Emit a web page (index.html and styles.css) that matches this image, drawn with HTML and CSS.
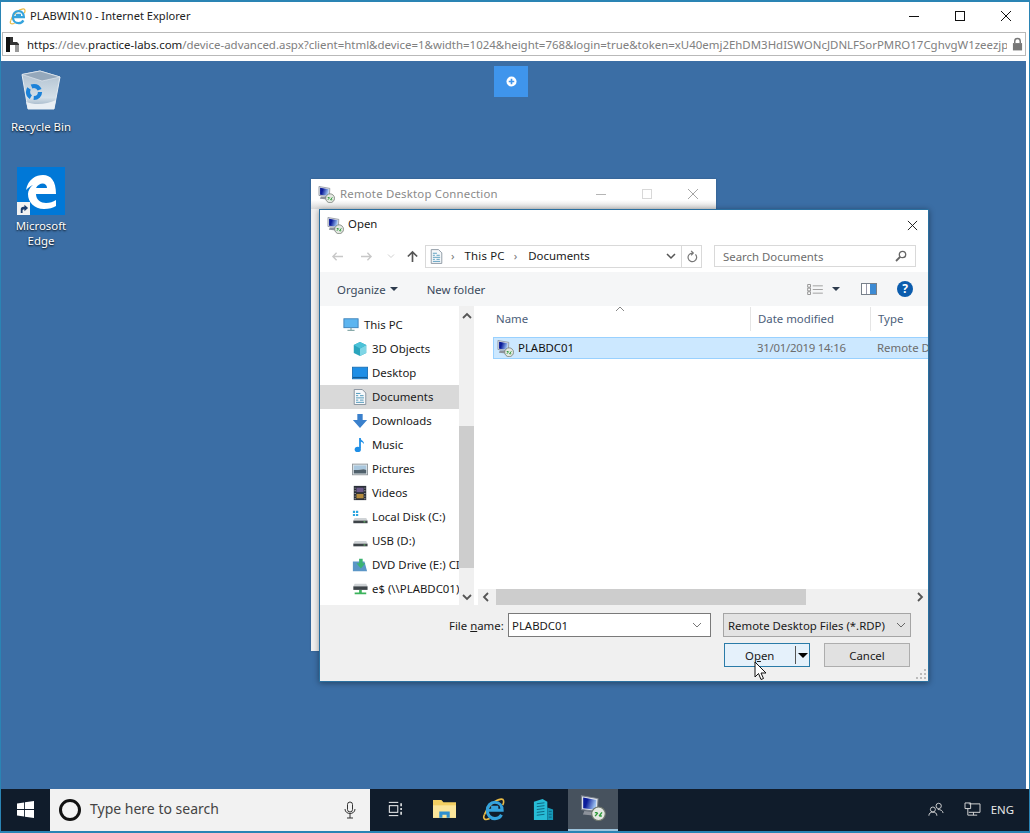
FILE: index.html
```html
<!DOCTYPE html>
<html lang="en">
<head>
<meta charset="utf-8">
<title>PLABWIN10 - Internet Explorer</title>
<link rel="stylesheet" href="styles.css">
</head>
<body>
<svg class="defs" width="0" height="0" aria-hidden="true">
  <defs>
    <linearGradient id="scr" x1="0" y1="0" x2="1" y2="0.3"><stop offset=".35" stop-color="#0c1d9a"/><stop offset="1" stop-color="#9cc0f0"/></linearGradient>
    <linearGradient id="binfill" x1="0" y1="0" x2="0" y2="1"><stop offset="0" stop-color="#aebfcf"/><stop offset=".7" stop-color="#d5e0e8"/><stop offset="1" stop-color="#8fa7bd"/></linearGradient>
    <symbol id="rdp" viewBox="0 0 18 18">
      <path d="M1 .5l11.500 2-.5 9L1 10z" fill="#dfe3ea" stroke="#7a808a" stroke-width=".7"/>
      <path d="M2.200 1.800l9.100 1.600-.4 6.800-8.700-1z" fill="url(#scr)"/>
      <path d="M3 11l8 .8 1.500 2.700-10.500-1z" fill="#8d929b"/>
      <circle cx="12.800" cy="13" r="4.700" fill="#e4e8e2" stroke="#70786f" stroke-width=".8"/>
      <path d="M10.500 14.600l1.800-2.200M13.200 14.600l2-2.600M10.300 12.200h1.800M13.400 14.600h1.700" stroke="#2d9a3a" stroke-width="1" fill="none"/>
    </symbol>
    <symbol id="docicon" viewBox="0 0 16 18">
      <path d="M1.500 .5h9l4 4v13h-13z" fill="#f6f8fa" stroke="#7d8a96"/>
      <path d="M3.500 5h5M3.500 7.500h2.500M8 7.500h4M3.500 10h9M3.500 12.500h2.500M8 12.500h4M3.500 15h9" stroke="#3f8fb5" stroke-width="1"/>
    </symbol>
    <symbol id="ie" viewBox="0 0 24 24">
      <path d="M2.500 17.500C6 8 14 1.800 20 1.200c3-.2 3.300 2.800 1.600 6.300" fill="none" stroke="#e9bb46" stroke-width="1.700"/>
      <path d="M2.500 17.500c-2 4.500.5 6 5.500 4" fill="none" stroke="#e9bb46" stroke-width="1.700"/>
      <path d="M6 12.800h15c0-5-3-8.300-7.500-8.300S5.500 8 5.500 13s3.500 8.500 8 8.500c3 0 5.500-1.500 6.800-4M9.500 9.800h7.500" fill="none" stroke="#35a3dc" stroke-width="3.200"/>
    </symbol>
  </defs>
</svg>

<div class="browser">
  <header class="titlebar">
    <svg class="ie-title"><use href="#ie"/></svg>
    <span class="title-text">PLABWIN10 - Internet Explorer</span>
    <div class="winctl">
      <svg viewBox="0 0 12 12" class="ctl"><path d="M1 6.500h10" stroke="#111" fill="none"/></svg>
      <svg viewBox="0 0 12 12" class="ctl"><rect x="1.500" y="1.500" width="9" height="9" stroke="#111" fill="none"/></svg>
      <svg viewBox="0 0 12 12" class="ctl"><path d="M1 1l10 10M11 1L1 11" stroke="#111" fill="none"/></svg>
    </div>
  </header>

  <div class="addressbar">
    <svg class="favicon" viewBox="0 0 14 16"><path d="M0 1h4v15H0z" fill="#111"/><path d="M4 1h3v5h4l2 2v8H9V9H4z" fill="#333"/><path d="M9 9h4v7H9z" fill="#999"/></svg>
    <span class="url"><b>https</b>://dev.<b>practice-labs.com</b>/device-advanced.aspx?client=html&amp;device=1&amp;width=1024&amp;height=768&amp;login=true&amp;token=xU40emj2EhDM3HdISWONcJDNLFSorPMRO17CghvgW1zeezjp</span>
    <svg class="lock" viewBox="0 0 12 14"><path d="M3 6V4a3 3 0 0 1 6 0v2" fill="none" stroke="#777" stroke-width="1.600"/><rect x="1" y="6" width="10" height="8" fill="#777"/></svg>
  </div>

  <main class="desktop">
    <div class="desk-icon bin">
      <svg class="bin-art" viewBox="0 0 40 44">
        <path d="M1 4.500L19 1l20 6-6 32H7z" fill="url(#binfill)" stroke="#e6edf3"/>
        <path d="M1 4.500L19 1l20 6-18 4z" fill="#95a8bb" stroke="#dfe7ee" stroke-width=".7"/>
        <path d="M5 32c8 3 20 3 30-2l-2 9H7z" fill="#e9eff4"/>
        <g fill="none" stroke="#1b82d9" stroke-width="4.200">
          <circle cx="13" cy="22" r="6" stroke-dasharray="9.500 3"/>
        </g>
      </svg>
      <span>Recycle Bin</span>
    </div>
    <div class="desk-icon edge">
      <div class="edge-tile">
        <svg viewBox="0 0 48 48" class="edge-e"><path fill-rule="evenodd" d="M9 23C11 12 19 8 26 8c8 0 13 6 13 19H19c0 6 5 9 10 9 4 0 7-1 10-3v6c-3 2-7 3-12 3-10 0-16-7-16-15 0-3 2-7 5-9-3 1-5 3-7 5zM19 21h11c0-6-8-6-11 0z" fill="#fff"/></svg>
        <span class="shortcut"><svg viewBox="0 0 12 12"><path d="M3 11V7c0-2 1-3 3-3h1V2l4 3.500L7 9V7H6c-1 0-1 1-1 2v2z" fill="#1a3d6e"/></svg></span>
      </div>
      <span>Microsoft<br>Edge</span>
    </div>

    <button class="plus-btn" type="button" aria-label="Expand">
      <svg viewBox="0 0 12 12"><circle cx="6" cy="6" r="5.500" fill="#fff"/><path d="M6 3v6M3 6h6" stroke="#3f95ec" stroke-width="1.800"/></svg>
    </button>

    <section class="rdc">
      <div class="rdc-title">
        <svg class="rdp-sm"><use href="#rdp"/></svg>
        <span class="rdc-text">Remote Desktop Connection</span>
        <div class="rdc-ctl">
          <svg viewBox="0 0 12 12"><path d="M1 6.500h10" stroke="#b5b5b5" fill="none"/></svg>
          <svg viewBox="0 0 12 12"><rect x="1.500" y="1.500" width="9" height="9" stroke="#d8d8d8" fill="none"/></svg>
          <svg viewBox="0 0 12 12"><path d="M1 1l10 10M11 1L1 11" stroke="#a5a5a5" fill="none"/></svg>
        </div>
      </div>
    </section>

    <section class="dialog">
      <div class="dlg-title">
        <svg class="rdp-sm"><use href="#rdp"/></svg>
        <span class="dlg-text">Open</span>
        <svg class="dlg-x" viewBox="0 0 12 12"><path d="M1 1l10 10M11 1L1 11" stroke="#111" fill="none"/></svg>
      </div>

      <div class="dlg-nav">
        <svg class="nav-ic" viewBox="0 0 14 12"><path d="M13 6H2M6 2L2 6l4 4" fill="none" stroke="#c8c8c8" stroke-width="1.500"/></svg>
        <svg class="nav-ic" viewBox="0 0 14 12"><path d="M1 6h11M8 2l4 4-4 4" fill="none" stroke="#c8c8c8" stroke-width="1.500"/></svg>
        <svg class="nav-caret" viewBox="0 0 8 6"><path d="M1 1.500l3 3 3-3" fill="none" stroke="#cfcfcf"/></svg>
        <svg class="nav-up" viewBox="0 0 14 14"><path d="M7 13V2M2 7l5-5 5 5" fill="none" stroke="#555" stroke-width="1.800"/></svg>
        <div class="crumbs">
          <svg class="crumb-doc"><use href="#docicon"/></svg>
          <span class="sep">›</span><span class="crumb-pc">This PC</span><span class="sep sep2">›</span><span>Documents</span>
          <svg class="crumb-chev" viewBox="0 0 10 8"><path d="M1 2l4 4 4-4" fill="none" stroke="#555" stroke-width="1.500"/></svg>
          <span class="crumb-refresh"><svg viewBox="0 0 14 14"><path d="M11 4.500A5 5 0 1 1 7 3h1M6 0.500L8.500 3 6 5.500" fill="none" stroke="#777" stroke-width="1.400"/></svg></span>
        </div>
        <div class="search">
          <span>Search Documents</span>
          <svg viewBox="0 0 12 12"><circle cx="7.500" cy="4.500" r="3.200" fill="none" stroke="#666" stroke-width="1.300"/><path d="M5 7l-4 4" stroke="#666" stroke-width="1.800"/></svg>
        </div>
      </div>

      <div class="dlg-tools">
        <span class="tool">Organize</span><i class="tri"></i>
        <span class="tool newf">New folder</span>
        <div class="tools-right">
          <svg class="view-ic" viewBox="0 0 18 12"><path d="M.5.5h3v3h-3zM.5 4.500h3v3h-3zM.5 8.500h3v3h-3z" fill="#fff" stroke="#8b8b8b"/><path d="M6 2h11M6 6h11M6 10h11" stroke="#9a9a9a"/></svg>
          <i class="tri view-tri"></i>
          <svg class="pane-ic" viewBox="0 0 16 12"><rect x=".5" y=".5" width="15" height="11" fill="#fff" stroke="#77808a"/><rect x="9" y="1" width="6" height="10" fill="#3d8bd4"/><rect x="5" y="1" width="1" height="10" fill="#99a"/></svg>
          <svg class="help-ic" viewBox="0 0 16 16"><circle cx="8" cy="8" r="8" fill="#0b5cad"/><text x="8" y="12" text-anchor="middle" class="help-q">?</text></svg>
        </div>
      </div>

      <div class="dlg-body">
        <nav class="tree">
          <div class="tree-item root"><svg viewBox="0 0 18 16"><rect x="1" y="1" width="16" height="10" fill="#5db5f0" stroke="#3b7fb8"/><path d="M5 14h8M9 11v3" stroke="#8aa" stroke-width="1.500"/></svg><span>This PC</span></div>
          <div class="tree-item"><svg viewBox="0 0 18 18"><path d="M9 1l7 3.500v9L9 17l-7-3.500v-9z" fill="#2aa5bd"/><path d="M9 8.500V17l7-3.500v-9z" fill="#7fd6e6"/><path d="M2 4.500L9 1l7 3.500-7 4z" fill="#4cc2d8"/></svg><span>3D Objects</span></div>
          <div class="tree-item"><svg viewBox="0 0 18 14"><rect x=".5" y=".5" width="17" height="13" fill="#1e8ee6" stroke="#1a6fb4"/><path d="M1 12h16" stroke="#0d4f85"/></svg><span>Desktop</span></div>
          <div class="tree-item active"><svg viewBox="0 0 16 18"><use href="#docicon"/></svg><span>Documents</span></div>
          <div class="tree-item"><svg viewBox="0 0 18 18"><path d="M6 1h6v7h5l-8 9-8-9h5z" fill="#3a80cc"/></svg><span>Downloads</span></div>
          <div class="tree-item"><svg viewBox="0 0 18 18"><path d="M9 1v12" stroke="#1e8ee6" stroke-width="2"/><ellipse cx="6.500" cy="14" rx="3.500" ry="3" fill="#1e8ee6"/><path d="M9 1c1 3 5 3 4.500 7-1-2-3-2.500-4.500-3z" fill="#1e8ee6"/></svg><span>Music</span></div>
          <div class="tree-item"><svg viewBox="0 0 18 16"><rect x=".5" y="2.500" width="17" height="12" fill="#dfe6ea" stroke="#8c9398"/><path d="M2 4h14v5c-4-2-8 1-14 0z" fill="#a9c7de"/><path d="M2 9c6 1 10-2 14 0v4H2z" fill="#50606b"/></svg><span>Pictures</span></div>
          <div class="tree-item"><svg viewBox="0 0 16 18"><rect x="1" y="1" width="14" height="16" fill="#2a2f38"/><path d="M4 3h8v5H4z" fill="#6c5a8a"/><path d="M4 10h8v5H4z" fill="#b58c3d"/><path d="M2 3h1v1H2zM2 6h1v1H2zM2 9h1v1H2zM2 12h1v1H2zM2 15h1v1H2zM13 3h1v1h-1zM13 6h1v1h-1zM13 9h1v1h-1zM13 12h1v1h-1zM13 15h1v1h-1z" fill="#ddd"/></svg><span>Videos</span></div>
          <div class="tree-item"><svg viewBox="0 0 18 16"><path d="M1 1h2.500v2.500H1zM4.500 1H7v2.500H4.500zM1 4.500h2.500V7H1zM4.500 4.500H7V7H4.500z" fill="#2aa5e0"/><path d="M3 9h13l1.500 3H1.500z" fill="#cfd3d6"/><rect x="1.500" y="12" width="16" height="3" fill="#3e4449"/><rect x="13" y="13" width="2" height="1" fill="#6fdc6f"/></svg><span>Local Disk (C:)</span></div>
          <div class="tree-item"><svg viewBox="0 0 18 16"><path d="M3 8h13l1.500 3H1.500z" fill="#cfd3d6"/><rect x="1.500" y="11" width="16" height="3" fill="#3e4449"/><rect x="13" y="12" width="2" height="1" fill="#6fdc6f"/></svg><span>USB (D:)</span></div>
          <div class="tree-item"><svg viewBox="0 0 18 16"><path d="M1 4h13l3 11H1z" fill="#5b96c7"/><path d="M8 1h4v5h3l-5 6-5-6h3z" fill="#3cb371"/></svg><span>DVD Drive (E:) CI</span></div>
          <div class="tree-item"><svg viewBox="0 0 18 16"><path d="M3 2h13l1.500 3H1.500z" fill="#cfd3d6"/><rect x="1.500" y="5" width="16" height="4" fill="#3e4449"/><path d="M8 9h3v3h5v2H3v-2h5z" fill="#3cb35c"/></svg><span>e$ (\\PLABDC01)</span></div>
        </nav>
        <div class="vscroll">
          <svg class="arrow" viewBox="0 0 10 8"><path d="M1 6l4-4 4 4" fill="none" stroke="#555" stroke-width="1.800"/></svg>
          <div class="vthumb"></div>
          <svg class="arrow" viewBox="0 0 10 8"><path d="M1 2l4 4 4-4" fill="none" stroke="#555" stroke-width="1.800"/></svg>
        </div>
        <div class="files">
          <div class="file-head">
            <span class="col-name">Name</span>
            <span class="col-date">Date modified</span>
            <span class="col-type">Type</span>
            <svg class="sort" viewBox="0 0 10 6"><path d="M1 5l4-4 4 4" fill="none" stroke="#888"/></svg>
          </div>
          <div class="file-row">
            <span class="col-name file-name"><svg class="rdp-sm"><use href="#rdp"/></svg><span>PLABDC01</span></span>
            <span class="col-date muted stamp">31/01/2019 14:16</span>
            <span class="col-type muted">Remote D</span>
          </div>
          <div class="hscroll">
            <svg class="arrow" viewBox="0 0 8 10"><path d="M6 1L2 5l4 4" fill="none" stroke="#555" stroke-width="1.800"/></svg>
            <div class="hthumb"></div>
            <svg class="arrow" viewBox="0 0 8 10"><path d="M2 1l4 4-4 4" fill="none" stroke="#555" stroke-width="1.800"/></svg>
          </div>
        </div>
      </div>

      <div class="dlg-foot">
        <div class="foot-row">
          <label class="fname-label">File <u>n</u>ame:</label>
          <div class="fname"><span>PLABDC01</span><svg viewBox="0 0 10 6"><path d="M1 1l4 4 4-4" fill="none" stroke="#777"/></svg></div>
          <div class="ftype"><span>Remote Desktop Files (*.RDP)</span><svg viewBox="0 0 10 6"><path d="M1 1l4 4 4-4" fill="none" stroke="#666"/></svg></div>
        </div>
        <div class="foot-row btns">
          <div class="btn open"><span class="open-label">O<u>p</u>en</span><i class="open-sep"></i><i class="tri black"></i></div>
          <div class="btn cancel">Cancel</div>
        </div>
        <svg class="grip" viewBox="0 0 10 10"><path d="M8 0h2v2H8zM4 4h2v2H4zM8 4h2v2H8zM0 8h2v2H0zM4 8h2v2H4zM8 8h2v2H8z" fill="#bbb"/></svg>
      </div>
      <svg class="cursor" viewBox="0 0 13 20"><path d="M1 1v15l3.500-3.500L7 18.500l2.500-1-2.500-5.500h5z" fill="#fff" stroke="#111"/></svg>
    </section>
  </main>

  <footer class="taskbar">
    <div class="start"><svg viewBox="0 0 16 16"><path d="M0 2.300l6.700-1v6.300H0zM7.500 1.200L16 0v7.600H7.500zM0 8.400h6.700v6.300l-6.700-1zM7.500 8.400H16V16l-8.500-1.200z" fill="#fff"/></svg></div>
    <div class="tsearch">
      <span class="cortana"></span>
      <span class="ts-text">Type here to search</span>
      <svg class="mic" viewBox="0 0 12 18"><rect x="3.500" y="1" width="5" height="10" rx="2.500" fill="none" stroke="#333"/><path d="M1 8c0 6 10 6 10 0M6 13v4M3 17h6" fill="none" stroke="#333"/></svg>
    </div>
    <div class="tb-apps">
      <div class="tb-app"><svg viewBox="0 0 18 16"><path d="M3 1h10M3 15h10" stroke="#fff"/><rect x="3.500" y="4.500" width="9" height="7" fill="none" stroke="#fff"/><path d="M16 2v3M16 7v2M16 11v3" stroke="#fff" stroke-width="1.500"/></svg></div>
      <div class="tb-app"><svg class="big" viewBox="0 0 22 20"><path d="M0 1h8l2 2h12v15H0z" fill="#f3cf62"/><path d="M0 6h22v12H0z" fill="#fbe59a"/><path d="M6 18v-6h10v6h-3v-3H9v3z" fill="#2f8fcf"/></svg></div>
      <div class="tb-app"><svg class="big"><use href="#ie"/></svg></div>
      <div class="tb-app"><svg class="big" viewBox="0 0 22 24"><path d="M1 4l9-3 5 3v19H1z" fill="#27bcd6"/><path d="M15 10l6 2v11h-6z" fill="#1598b8"/><path d="M4 6l8-1M4 9l8-1M4 12l8-1M4 15l8-1M4 18l8-1M16.500 14h3M16.500 17h3M16.500 20h3" stroke="#0d6580"/></svg></div>
      <div class="tb-app active"><svg class="rdp-big"><use href="#rdp"/></svg></div>
    </div>
    <div class="tray">
      <svg class="tray-p" viewBox="0 0 18 16"><circle cx="12" cy="4" r="3" fill="none" stroke="#ddd"/><circle cx="5.500" cy="8" r="2.800" fill="none" stroke="#ddd"/><path d="M1 15c0-3 2-4 4.500-4s4.500 1 4.500 4M11 8c3 0 5.500 1 6 4" fill="none" stroke="#ddd"/></svg>
      <svg class="tray-n" viewBox="0 0 18 16"><path d="M5 2h12v9H5M1 1h6v6H1zM4 7v7h10M10 11v3" fill="none" stroke="#ddd"/></svg>
      <span>ENG</span>
    </div>
  </footer>
</div>
</body>
</html>
```

FILE: styles.css
```css
* { box-sizing: border-box; }
html, body { margin: 0; height: 100%; }
body { font-family: "Noto Sans", "Open Sans", sans-serif; font-size: 11.4px; color: #1a1a1a; background: #fff; overflow: hidden; }
svg { display: block; flex: none; }
.defs { position: absolute; }

.browser { width: 1030px; height: 833px; display: flex; flex-direction: column; border: 1px solid #2a84b4; border-top-width: 2px; border-bottom-width: 2px; background: #fff; }

.titlebar { height: 30px; display: flex; align-items: center; padding: 0 0 2px 8px; flex: none; }
.ie-title { width: 17px; height: 17px; margin-right: 4px; }
.title-text { color: #222; font-size: 11.1px; padding-bottom: 2px; }
.winctl { margin-left: auto; display: flex; gap: 34px; padding-right: 17px; }
.ctl { width: 12px; height: 12px; }

.addressbar { height: 24px; margin: 0 3px 0 1px; display: flex; align-items: center; border: 1px solid #b9b9b9; padding-left: 3px; flex: none; overflow: hidden; }
.favicon { width: 14px; height: 16px; margin-right: 7px; }
.url { flex: 1; min-width: 0; white-space: nowrap; overflow: hidden; font-size: 11.45px; color: #808080; }
.url b { font-weight: 400; color: #222; }
.lock { width: 11px; height: 14px; margin: 0 2px 0 5px; }

.desktop { position: relative; flex: 1; margin-top: 5px; margin-right: 3px; background: #3b6ea5; }

.desk-icon { position: absolute; width: 76px; display: flex; flex-direction: column; align-items: center; color: #fff; text-align: center; line-height: 15px; text-shadow: 0 1px 2px #000; }
.bin { left: 2px; top: 9px; }
.bin-art { width: 40px; height: 44px; margin-bottom: 5px; }
.edge { left: 2px; top: 106px; }
.edge-tile { position: relative; width: 48px; height: 48px; background: #0078d7; margin-bottom: 3px; }
.edge-e { width: 48px; height: 48px; }
.shortcut { position: absolute; left: 0; bottom: 0; width: 13px; height: 13px; background: #f2f2f2; padding: 1px; }

.plus-btn { position: absolute; left: 493px; top: 5px; width: 34px; height: 31px; background: #3f95ec; border: 0; padding: 0; display: flex; align-items: center; justify-content: center; }
.plus-btn svg { width: 11px; height: 11px; }

.rdc { position: absolute; left: 310px; top: 118px; width: 405px; height: 472px; background: #f0f0f0; box-shadow: 0 0 2px rgba(0,0,0,.2); }
.rdc-title { height: 30px; display: flex; align-items: center; padding-left: 7px; background: linear-gradient(#fff 70%, #d8d8d8); color: #8a8a8a; letter-spacing: .2px; }
.rdc-text { padding-bottom: 2px; }
.rdp-sm { width: 17px; height: 17px; margin-right: 5px; }
.rdc-ctl { margin-left: auto; display: flex; gap: 34px; padding-right: 17px; }
.rdc-ctl svg { width: 12px; height: 12px; }

.dialog { position: absolute; left: 318px; top: 148px; width: 610px; height: 473px; background: #fff; border: 1px solid #2a6f9f; box-shadow: 0 1px 6px rgba(0,0,0,.4); display: flex; flex-direction: column; }
.dlg-title { height: 30px; display: flex; align-items: center; padding-left: 7px; flex: none; }
.dlg-title .rdp-sm { margin-right: 4px; }
.dlg-text { padding-bottom: 4px; }
.dlg-x { width: 11px; height: 11px; margin-left: auto; margin-right: 10px; }

.dlg-nav { height: 32px; display: flex; align-items: center; padding-left: 11px; flex: none; }
.nav-ic { width: 13px; height: 11px; margin-right: 16px; }
.nav-caret { width: 8px; height: 6px; margin-left: -2px; margin-right: 11px; }
.nav-up { width: 13px; height: 13px; margin-right: 6px; }
.crumbs { width: 277px; height: 23px; border: 1px solid #d9d9d9; display: flex; align-items: center; padding-left: 4px; }
.crumbs > span { padding-bottom: 2px; }
.crumb-doc { width: 13px; height: 15px; margin-right: 7px; }
.sep { color: #777; margin: 0 10px 0 1px; }
.sep2 { margin-left: 9px; margin-right: 11px; }
.crumb-pc { letter-spacing: .2px; }
.crumb-chev { width: 10px; height: 8px; margin-left: auto; margin-right: 5px; }
.crumbs > .crumb-refresh { width: 20px; height: 21px; border-left: 1px solid #d9d9d9; display: flex; align-items: center; justify-content: center; padding: 0; }
.crumb-refresh svg { width: 12px; height: 13px; }
.search { width: 202px; height: 22px; margin-left: 12px; border: 1px solid #d9d9d9; display: flex; align-items: center; justify-content: space-between; padding: 0 8px; color: #6d6d6d; }
.search svg { width: 12px; height: 12px; }

.dlg-tools { height: 34px; background: #f5f6f7; display: flex; align-items: center; padding-left: 17px; flex: none; }
.tool { color: #3a4a5c; }
.tri { width: 0; height: 0; border-left: 4px solid transparent; border-right: 4px solid transparent; border-top: 4px solid #2d3b4d; margin-left: 4px; display: block; }
.newf { margin-left: 29px; }
.tools-right { margin-left: auto; display: flex; align-items: center; padding-right: 15px; }
.view-ic { width: 17px; height: 11px; }
.view-tri { margin-left: 8px; }
.pane-ic { width: 16px; height: 12px; margin-left: 21px; }
.help-ic { width: 16px; height: 16px; margin-left: 20px; }
.help-q { font: 700 12px "Noto Sans", sans-serif; fill: #fff; }

.dlg-body { height: 299px; display: grid; grid-template-columns: 139px 15px 1fr; flex: none; overflow: hidden; }
.tree { padding-top: 7px; overflow: hidden; }
.tree-item { height: 24px; display: flex; align-items: center; padding-left: 32px; white-space: nowrap; overflow: hidden; }
.tree-item span { padding-bottom: 2px; }
.tree-item svg { width: 16px; height: 16px; margin-right: 4px; }
.tree-item.root { padding-left: 23px; }
.tree-item.root svg { margin-right: 5px; }
.tree-item.active { background: #d9d9d9; }
.vscroll { background: #f0f0f0; display: flex; flex-direction: column; align-items: center; padding: 6px 0 4px; }
.vscroll .arrow { width: 10px; height: 8px; }
.vthumb { width: 15px; height: 142px; background: #cdcdcd; margin: 106px 0 25px; }

.files { position: relative; margin-left: 4px; display: flex; flex-direction: column; overflow: hidden; }
.file-head { position: relative; height: 26px; display: flex; align-items: center; color: #4c607a; }
.col-name { width: 272px; padding-left: 18px; flex: none; }
.col-date { width: 120px; padding-left: 7px; flex: none; white-space: nowrap; }
.col-type { padding-left: 7px; white-space: nowrap; }
.file-head .col-name { padding-bottom: 2px; }
.file-head .col-date, .file-head .col-type { border-left: 1px solid #e5e5e5; line-height: 24px; }
.sort { position: absolute; left: 137px; top: 0; width: 10px; height: 6px; }
.file-row { height: 22px; margin: 5px 0 0 15px; background: #cce8ff; border-top: 1px solid #99d1ff; border-bottom: 1px solid #99d1ff; border-left: 1px solid #99d1ff; display: flex; align-items: center; flex: none; }
.file-row .col-name { width: 256px; padding-left: 3px; display: flex; align-items: center; color: #111; }
.file-row span span, .file-row .muted { padding-bottom: 2px; }
.file-row .rdp-sm { margin-right: 4px; }
.muted { color: #6d6d6d; }
.stamp { letter-spacing: -.25px; }
.hscroll { margin-top: auto; height: 16px; background: #f0f0f0; display: flex; align-items: center; justify-content: space-between; padding: 0 4px; flex: none; }
.hscroll .arrow { width: 8px; height: 10px; }
.hthumb { width: 310px; height: 16px; background: #cdcdcd; margin-left: 6px; margin-right: auto; }

.dlg-foot { position: relative; flex: 1; background: #f0f0f0; display: flex; flex-direction: column; padding-top: 8px; }
.foot-row { display: flex; align-items: center; }
.fname-label { margin-left: 129px; width: 59px; }
.fname { width: 203px; height: 24px; background: #fff; border: 1px solid #7a7a7a; display: flex; align-items: center; justify-content: space-between; padding: 0 8px 0 3px; }
.fname svg, .ftype svg { width: 10px; height: 6px; }
.ftype { width: 188px; height: 24px; margin-left: 12px; background: #e3e3e3; border: 1px solid #a5a5a5; display: flex; align-items: center; justify-content: space-between; padding: 0 4px; }
.btns { margin-top: 6px; padding-left: 404px; }
.btn { height: 24px; display: flex; align-items: center; }
.open { width: 86px; background: #e5f1fb; border: 1px solid #2a7ba8; padding-left: 20px; }
.open-sep { width: 1px; height: 18px; background: #555; margin-left: 21px; }
.tri.black { border-top-color: #000; margin-left: 2px; border-left-width: 5px; border-right-width: 5px; border-top-width: 5px; }
.cancel { width: 86px; margin-left: 14px; background: #e1e1e1; border: 1px solid #adadad; justify-content: center; }
.grip { position: absolute; right: 2px; bottom: 2px; width: 10px; height: 10px; }
.cursor { position: absolute; left: 434px; top: 451px; width: 13px; height: 20px; }

.taskbar { height: 42px; flex: none; background: #101c2b; display: flex; align-items: stretch; margin-top: -2px; position: relative; }
.start { width: 49px; display: flex; align-items: center; justify-content: center; padding-bottom: 1px; }
.start svg { width: 17px; height: 17px; }
.tsearch { width: 320px; background: #f2f2f2; display: flex; align-items: center; padding: 0 14px 0 9px; }
.cortana { width: 22px; height: 22px; border: 3px solid #111; border-radius: 50%; margin-right: 9px; }
.ts-text { font-size: 14px; color: #444; padding-bottom: 3px; }
.mic { width: 12px; height: 18px; margin-left: auto; }
.tb-apps { display: flex; }
.tb-app { width: 49.5px; display: flex; align-items: center; justify-content: center; padding-bottom: 2px; }
.tb-app svg { width: 17px; height: 16px; }
.tb-app svg.big { width: 23px; height: 23px; }
.tb-app.active { background: #47525e; border-bottom: 2px solid #9cc3dc; }
.tb-app svg.rdp-big { width: 26px; height: 26px; }
.tray { margin-left: auto; display: flex; align-items: center; color: #e8e8e8; padding: 0 15px 2px 0; }
.tray-p { width: 16px; height: 15px; margin-right: 20px; }
.tray-n { width: 17px; height: 15px; margin-right: 10px; }
```
